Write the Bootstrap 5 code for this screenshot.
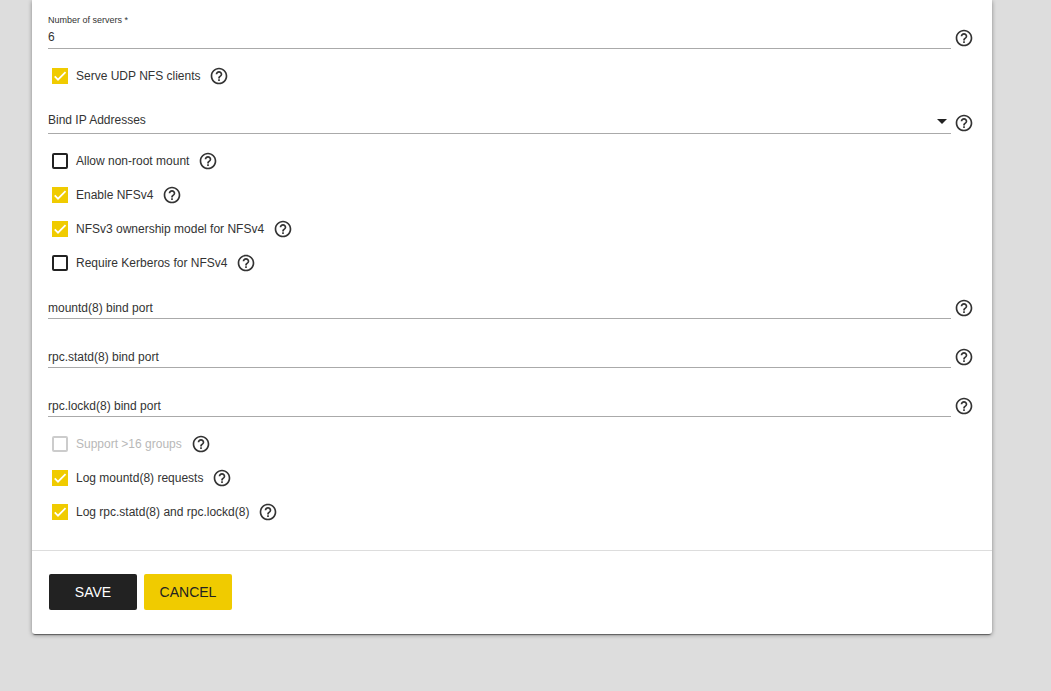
<!DOCTYPE html>
<html lang="en">
<head>
<meta charset="utf-8">
<meta name="viewport" content="width=device-width, initial-scale=1">
<title>NFS</title>
<link href="https://cdn.jsdelivr.net/npm/bootstrap@5.3.0/dist/css/bootstrap.min.css" rel="stylesheet">
<style>
  body { background: #ddd; color: #333; font: 12px/16px "Liberation Sans", Arial, sans-serif; }
  .page { padding: 0 59px 32px 32px; }
  .panel { --bs-card-border-width: 0; --bs-card-border-radius: 0 0 3px 3px; box-shadow: 0 2px 1px -1px rgba(0,0,0,.45), 0 1px 4px rgba(0,0,0,.4); color: inherit; }
  .panel-fields { padding: 0 18px 21px 16px; }
  .panel-buttons { gap: 7px; padding: 23px 17px 24px; border-top: 1px solid #ddd; }

  .field-row { gap: 3px; margin-bottom: 10px; }
  .field-row .help-btn { margin-bottom: 1px; }
  .field-box { display: grid; min-height: 39px; border-bottom: 1px solid #aaa; }
  .field-box > * { grid-area: 1 / 1; }
  .field-box label { align-self: end; padding: 2px 0; pointer-events: none; z-index: 1; }
  .field-box.filled { min-height: 49px; padding-top: 14px; }
  .field-box.filled label { align-self: start; padding: 0; font-size: 9px; line-height: 12px; }
  .field-box.picker { min-height: 41px; }
  .field-box.picker label { padding-bottom: 5px; }
  .field-box .form-control, .field-box .form-select {
    align-self: end; min-height: 0; padding: 2px 0 3px; border: 0; border-radius: 0; background-color: transparent;
    color: inherit; font-size: 12px; line-height: 16px; box-shadow: none;
  }
  .field-box .form-select {
    padding: 4px 0; cursor: pointer;
    background-image: url("data:image/svg+xml,%3Csvg xmlns='http://www.w3.org/2000/svg' viewBox='0 0 10 5'%3E%3Cpath d='M0 0h10L5 5z' fill='%23222'/%3E%3C/svg%3E");
    background-size: 10px 5px; background-position: right 4px center;
  }

  .check-row { height: 34px; gap: 8px; padding-left: 4px; }
  .check-row .help-btn { margin-left: 1px; }
  .check-row .form-check-input {
    flex: none; width: 16px; height: 16px; margin: 0; border: 2px solid #222; border-radius: 2px; box-shadow: none;
  }
  .check-row .form-check-input:checked {
    border: 0; border-radius: 0; background-color: #f0cb00; background-size: 16px 16px;
    background-image: url("data:image/svg+xml,%3Csvg xmlns='http://www.w3.org/2000/svg' viewBox='0 0 24 24'%3E%3Cpath d='M4.1 12.7 9 17.6 20.3 6.3' fill='none' stroke='%23fff' stroke-width='2.6'/%3E%3C/svg%3E");
  }
  .check-row .form-check-input:disabled { opacity: 1; border-color: #ccc; }
  .check-row .form-check-input:disabled ~ label { color: #b8b8b8; opacity: 1; }

  .help-btn { flex: none; padding: 0; border: 0; background: none; color: #333; line-height: 0; }
  .help-btn svg { width: 20px; height: 20px; fill: currentColor; }

  .action { width: 88px; height: 36px; padding: 0; border: 0; border-radius: 2px; font-size: 14px; line-height: 20px; }
  .action-save { background: #222; color: #fff; }
  .action-cancel { background: #f0cb00; color: #222; }
</style>
</head>
<body>
<svg class="d-none">
  <symbol id="help" viewBox="0 0 24 24"><path d="M11 18h2v-2h-2v2zm1-16C6.48 2 2 6.48 2 12s4.48 10 10 10 10-4.480 10-10S17.520 2 12 2zm0 18c-4.410 0-8-3.590-8-8s3.590-8 8-8 8 3.590 8 8-3.590 8-8 8zm0-14c-2.210 0-4 1.790-4 4h2c0-1.100.9-2 2-2s2 .9 2 2c0 2-3 1.750-3 5h2c0-2.250 3-2.500 3-5 0-2.210-1.790-4-4-4z"/></symbol>
</svg>
<main class="page">
  <form class="card panel">
    <div class="panel-fields">
      <div class="field-row d-flex align-items-end">
        <div class="field-box filled flex-grow-1">
          <label for="servers">Number of servers *</label>
          <input class="form-control" id="servers" type="text" value="6" required>
        </div>
        <button class="help-btn" type="button" aria-label="Help"><svg><use href="#help"/></svg></button>
      </div>
      <div class="check-row d-flex align-items-center">
        <input class="form-check-input" type="checkbox" id="udp" checked>
        <label for="udp">Serve UDP NFS clients</label>
        <button class="help-btn" type="button" aria-label="Help"><svg><use href="#help"/></svg></button>
      </div>
      <div class="field-row d-flex align-items-end">
        <div class="field-box picker flex-grow-1">
          <label for="bindip">Bind IP Addresses</label>
          <select class="form-select" id="bindip"><option></option></select>
        </div>
        <button class="help-btn" type="button" aria-label="Help"><svg><use href="#help"/></svg></button>
      </div>
      <div class="check-row d-flex align-items-center">
        <input class="form-check-input" type="checkbox" id="nonroot">
        <label for="nonroot">Allow non-root mount</label>
        <button class="help-btn" type="button" aria-label="Help"><svg><use href="#help"/></svg></button>
      </div>
      <div class="check-row d-flex align-items-center">
        <input class="form-check-input" type="checkbox" id="v4" checked>
        <label for="v4">Enable NFSv4</label>
        <button class="help-btn" type="button" aria-label="Help"><svg><use href="#help"/></svg></button>
      </div>
      <div class="check-row d-flex align-items-center">
        <input class="form-check-input" type="checkbox" id="v3owner" checked>
        <label for="v3owner">NFSv3 ownership model for NFSv4</label>
        <button class="help-btn" type="button" aria-label="Help"><svg><use href="#help"/></svg></button>
      </div>
      <div class="check-row d-flex align-items-center">
        <input class="form-check-input" type="checkbox" id="krb">
        <label for="krb">Require Kerberos for NFSv4</label>
        <button class="help-btn" type="button" aria-label="Help"><svg><use href="#help"/></svg></button>
      </div>
      <div class="field-row d-flex align-items-end">
        <div class="field-box flex-grow-1">
          <label for="mountd">mountd(8) bind port</label>
          <input class="form-control" id="mountd" type="text">
        </div>
        <button class="help-btn" type="button" aria-label="Help"><svg><use href="#help"/></svg></button>
      </div>
      <div class="field-row d-flex align-items-end">
        <div class="field-box flex-grow-1">
          <label for="statd">rpc.statd(8) bind port</label>
          <input class="form-control" id="statd" type="text">
        </div>
        <button class="help-btn" type="button" aria-label="Help"><svg><use href="#help"/></svg></button>
      </div>
      <div class="field-row d-flex align-items-end">
        <div class="field-box flex-grow-1">
          <label for="lockd">rpc.lockd(8) bind port</label>
          <input class="form-control" id="lockd" type="text">
        </div>
        <button class="help-btn" type="button" aria-label="Help"><svg><use href="#help"/></svg></button>
      </div>
      <div class="check-row d-flex align-items-center">
        <input class="form-check-input" type="checkbox" id="groups" disabled>
        <label for="groups">Support &gt;16 groups</label>
        <button class="help-btn" type="button" aria-label="Help"><svg><use href="#help"/></svg></button>
      </div>
      <div class="check-row d-flex align-items-center">
        <input class="form-check-input" type="checkbox" id="logmountd" checked>
        <label for="logmountd">Log mountd(8) requests</label>
        <button class="help-btn" type="button" aria-label="Help"><svg><use href="#help"/></svg></button>
      </div>
      <div class="check-row d-flex align-items-center">
        <input class="form-check-input" type="checkbox" id="logrpc" checked>
        <label for="logrpc">Log rpc.statd(8) and rpc.lockd(8)</label>
        <button class="help-btn" type="button" aria-label="Help"><svg><use href="#help"/></svg></button>
      </div>
    </div>
    <div class="panel-buttons d-flex">
      <button class="btn action action-save" type="submit">SAVE</button>
      <button class="btn action action-cancel" type="button">CANCEL</button>
    </div>
  </form>
</main>
<script src="https://cdn.jsdelivr.net/npm/bootstrap@5.3.0/dist/js/bootstrap.bundle.min.js"></script>
</body>
</html>
